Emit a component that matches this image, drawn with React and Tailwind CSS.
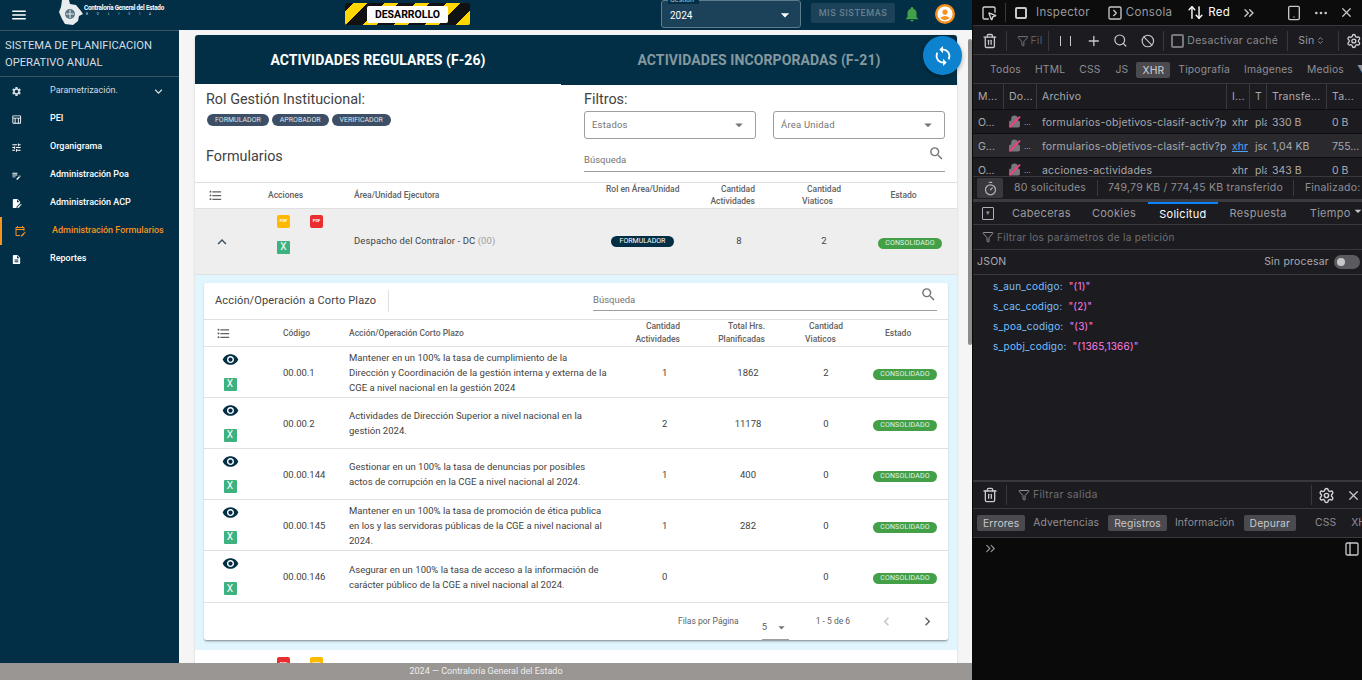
import React from "react";
import {
  MdMenu, MdSettings, MdTune, MdEditNote, MdEditDocument, MdDescription, MdExpandMore, MdExpandLess,
  MdArrowDropDown, MdNotifications, MdAccountCircle, MdSync, MdSearch, MdFormatListBulleted,
  MdRemoveRedEye, MdChevronLeft, MdChevronRight, MdOutlineTableChart, MdOutlineEditCalendar,
} from "react-icons/md";
import {
  Trash2, Funnel, Plus, Search, Ban, Settings, SquareMousePointer, SquareChevronRight, ArrowUpDown,
  ChevronsRight, Ellipsis, X, Timer, PanelLeft, Tablet, Lock, ChevronsUpDown,
} from "lucide-react";

const MENU = [
  { label: "Parametrización.", icon: MdSettings, chevron: true, light: true },
  { label: "PEI", icon: MdOutlineTableChart },
  { label: "Organigrama", icon: MdTune },
  { label: "Administración Poa", icon: MdEditNote },
  { label: "Administración ACP", icon: MdEditDocument },
  { label: "Administración Formularios", icon: MdOutlineEditCalendar, active: true },
  { label: "Reportes", icon: MdDescription },
];

const ROWS = [
  { code: "00.00.1", text: "Mantener en un 100% la tasa de cumplimiento de la Dirección y Coordinación de la gestión interna y externa de la CGE a nivel nacional en la gestión 2024", act: "1", hrs: "1862", via: "2" },
  { code: "00.00.2", text: "Actividades de Dirección Superior a nivel nacional en la gestión 2024.", act: "2", hrs: "11178", via: "0" },
  { code: "00.00.144", text: "Gestionar en un 100% la tasa de denuncias por posibles actos de corrupción en la CGE a nivel nacional al 2024.", act: "1", hrs: "400", via: "0" },
  { code: "00.00.145", text: "Mantener en un 100% la tasa de promoción de ética publica en los y las servidoras públicas de la CGE a nivel nacional al 2024.", act: "1", hrs: "282", via: "0" },
  { code: "00.00.146", text: "Asegurar en un 100% la tasa de acceso a la información de carácter público de la CGE a nivel nacional al 2024.", act: "0", hrs: "", via: "0", tall: true },
];

const PdfIcon = ({ red }) => (
  <div className={`w-[13px] h-[13px] rounded-[2px] flex items-center justify-center text-[4px] font-bold text-white leading-none ${red ? "bg-[#ea2d2e]" : "bg-[#ffb900]"}`}>
    PDF
  </div>
);

const XlsIcon = () => (
  <div className="w-[13px] h-[13px] rounded-[1px] bg-[#3cb281] flex items-center justify-center text-[10px] text-white leading-none">X</div>
);

const Chip = ({ children }) => (
  <span className="h-[12px] px-[8px] rounded-full bg-[#3d4f66] text-[7px] leading-[12px] text-[#dfe3e8]">{children}</span>
);

const Consolidado = () => (
  <span className="inline-block w-[64px] h-[11px] rounded-full bg-[#43a047] text-center text-[7px] leading-[11px] text-[#e4f3e5] tracking-[0.2px]">CONSOLIDADO</span>
);

const SelectBox = ({ label }) => (
  <div className="flex-1 h-[28px] border border-[#9e9e9e] rounded-[3px] flex items-center justify-between pl-[7px] pr-[7px] text-[9.5px] text-[#757575] tracking-[0.2px]">
    {label}
    <MdArrowDropDown className="text-[#757575]" size={18} />
  </div>
);

const Sidebar = () => (
  <aside className="w-[179px] shrink-0 bg-[#022f46] text-white">
    <div className="h-[47px] border-t border-b border-[#3a5568] pl-[5px] pt-[6px] text-[11.2px] leading-[17px] text-[#d5dde2] whitespace-nowrap">
      SISTEMA DE PLANIFICACION
      <br />
      OPERATIVO ANUAL
    </div>
    {MENU.map((m) => {
      const Icon = m.icon;
      return (
        <div
          key={m.label}
          className={`h-[28px] flex items-center border-l-2 pl-[9px] text-[9px] font-medium ${m.active ? "border-[#f6921e] text-[#f6921e]" : "border-transparent"} ${m.light ? "text-[#d5dde2] font-normal" : ""}`}
        >
          <Icon size={m.active ? 12 : 11} className={m.active ? "ml-[3px]" : ""} />
          <span className={`${m.active ? "ml-[26px]" : "ml-[28px]"} whitespace-nowrap flex-1`}>{m.label}</span>
          {m.chevron && <MdExpandMore size={15} className="mr-[13px]" />}
        </div>
      );
    })}
  </aside>
);

const Header = () => (
  <header className="h-[30px] shrink-0 bg-[#022f46] flex items-center text-white">
    <MdMenu size={18} className="ml-[10px]" />
    <div className="ml-[31px] w-[104px] h-[30px] flex items-start">
      <svg width="24" height="25" viewBox="0 0 24 25" className="shrink-0">
        <path d="M3 0h7l1 4 6 1 5 6 2 3-4 2-1 5-5 4-8-1-3-5-3-7 2-5z" fill="#e8ecef" />
        <circle cx="11" cy="14" r="5" fill="#5d7685" />
        <path d="M7 14h8M11 10v8" stroke="#e8ecef" strokeWidth="1" />
      </svg>
      <div className="ml-[1px] pt-[5px] leading-none">
        <div className="text-[6.3px] font-bold tracking-[-0.2px] whitespace-nowrap">Contraloría General del Estado</div>
        <div className="text-[3px] tracking-[9px] mt-[2px] pl-[2px] text-[#d5dde2]">BOLIVIA</div>
      </div>
    </div>
    <div className="ml-[182px] w-[125px] h-[22px] mb-[2px] rounded-[2px] flex items-center justify-center bg-[repeating-linear-gradient(-45deg,#ffd600_0,#ffd600_10px,#111111_10px,#111111_22px)]">
      <span className="w-[81px] h-[17px] rounded-[2px] bg-white text-black text-[10.5px] font-bold leading-[17px] text-center">DESARROLLO</span>
    </div>
    <div className="ml-[191px] w-[140px] h-[28px] self-start border border-[#5d7c8e] rounded-[3px] bg-[#1b4259] relative flex items-center justify-between pl-[8px] pr-[8px] pt-[2px]">
      <span className="absolute -top-[5px] left-[6px] bg-[#022f46] px-[2px] text-[7px] text-[#b8c5cd] leading-[8px]">Gestión*</span>
      <span className="text-[10px]">2024</span>
      <MdArrowDropDown size={20} className="-mr-[3px]" />
    </div>
    <div className="ml-[10px] w-[84px] h-[20px] mb-[4px] rounded-[2px] bg-[#1b4259] text-[#66808f] text-[9px] font-medium tracking-[0.6px] leading-[20px] text-center">MIS SISTEMAS</div>
    <MdNotifications size={18} className="ml-[8px] mb-[2px] text-[#43a047]" />
    <div className="ml-[14px] mb-[2px] w-[20px] h-[20px] rounded-full bg-[#f6921e] flex items-center justify-center">
      <MdAccountCircle size={18} className="text-white" />
    </div>
  </header>
);

const OuterHead = () => (
  <div className="h-[27px] pb-[1px] border-t border-b border-[#e0e0e0] grid grid-cols-[73px_86px_252px_74px_118px_52px_1fr] items-center text-[8.5px] font-medium text-[#616161] leading-[12px]">
    <MdFormatListBulleted size={15} className="ml-[13px] text-[#616161]" />
    <span>Acciones</span>
    <span>Área/Unidad Ejecutora</span>
    <span className="whitespace-nowrap self-start">Rol en Área/Unidad</span>
    <span className="pr-[43px] text-right whitespace-nowrap">Cantidad<br />Actividades</span>
    <span className="pl-[4px] whitespace-nowrap"><span className="pl-[5px]">Cantidad</span><br />Viaticos</span>
    <span className="text-center">Estado</span>
  </div>
);

const OpenRow = () => (
  <div className="h-[66px] bg-[#eeeeee] border-b border-[#e0e0e0] grid grid-cols-[73px_86px_252px_74px_118px_52px_1fr] items-center text-[9.5px] text-[#424242]">
    <MdExpandLess size={18} className="ml-[18px] text-[#37505f]" />
    <div className="grid grid-cols-[33px_13px] gap-y-[13px] pl-[9px] pb-[15px]">
      <PdfIcon />
      <PdfIcon red />
      <XlsIcon />
    </div>
    <div className="whitespace-nowrap tracking-[0.1px]">
      Despacho del Contralor - DC <span className="text-[#9e9e9e]">(00)</span>
    </div>
    <div className="pl-[5px]">
      <span className="block w-[63px] h-[11px] rounded-full bg-[#022f46] text-center text-[7px] leading-[11px] text-white">FORMULADOR</span>
    </div>
    <span className="text-center">8</span>
    <span className="text-center">2</span>
    <div className="pl-[28px] pt-[2px]"><Consolidado /></div>
  </div>
);

const InnerTable = () => (
  <div className="bg-white rounded-[3px] border-b border-[#9aa5ab] shadow-[0_1px_2px_rgba(0,0,0,0.2)]">
    <div className="h-[36px] flex items-center">
      <div className="w-[185px] h-[22px] border-r border-[#e0e0e0] pl-[11px] text-[11px] leading-[22px] text-[#424242] tracking-[0.15px] whitespace-nowrap">Acción/Operación a Corto Plazo</div>
      <div className="ml-[204px] w-[344px] h-[26px] mb-[6px] border-b border-[#9e9e9e] flex items-center justify-between text-[9.5px] text-[#757575]">
        <span className="pt-[6px]">Búsqueda</span>
        <MdSearch size={17} className="mb-[6px] text-[#757575]" />
      </div>
    </div>
    <div className="h-[28px] pb-[2px] border-t border-b border-[#e0e0e0] grid grid-cols-[79px_66px_281px_68px_84px_88px_70px] items-center text-[8.5px] font-medium text-[#616161] leading-[13px]">
      <MdFormatListBulleted size={15} className="ml-[12px]" />
      <span>Código</span>
      <span>Acción/Operación Corto Plazo</span>
      <span className="pr-[18px] text-right whitespace-nowrap">Cantidad<br />Actividades</span>
      <span className="pr-[17px] text-right whitespace-nowrap">Total Hrs.<br />Planificadas</span>
      <span className="pl-[23px] whitespace-nowrap"><span className="pl-[4px]">Cantidad</span><br />Viaticos</span>
      <span className="pl-[15px]">Estado</span>
    </div>
    {ROWS.map((r) => (
      <div key={r.code} className={`${r.tall ? "h-[52px]" : "h-[51px]"} border-b border-[#e0e0e0] grid grid-cols-[79px_66px_281px_68px_84px_88px_70px] items-center text-[9.5px] text-[#424242] leading-[15px]`}>
        <div className="flex flex-col items-center w-[52px] gap-[10px] pb-[3px]">
          <MdRemoveRedEye size={17} className="text-[#022f46]" />
          <XlsIcon />
        </div>
        <span>{r.code}</span>
        <span className="pr-[22px] tracking-[0.02px]">{r.text}</span>
        <span className="pl-[32px] text-left">{r.act}</span>
        <span className="pl-[16px] text-center">{r.hrs}</span>
        <span className="text-center">{r.via}</span>
        <div className="pl-[3px]"><Consolidado /></div>
      </div>
    ))}
    <div className="h-[37px] flex items-center text-[8.5px] text-[#616161]">
      <span className="ml-[474px]">Filas por Página</span>
      <div className="ml-[23px] w-[27px] h-[24px] mt-[12px] border-b border-[#9e9e9e] flex items-center justify-between">
        <span className="text-[9.5px]">5</span>
        <MdArrowDropDown size={15} className="text-[#757575]" />
      </div>
      <span className="ml-[27px] whitespace-nowrap">1 - 5 de 6</span>
      <MdChevronLeft size={17} className="ml-[28px] text-[#c4c4c4]" />
      <MdChevronRight size={17} className="ml-[24px] text-[#616161]" />
    </div>
  </div>
);

const Card = () => (
  <div className="relative w-[762px] ml-[16px] mt-[5px] bg-white shadow-[0_1px_3px_rgba(0,0,0,0.15)] rounded-t-[3px]">
    <div className="h-[50px] flex text-[14px] font-bold">
      <div className="w-[366px] h-[49px] bg-[#022f46] rounded-tl-[3px] text-center leading-[50px] text-white tracking-[0.1px]">ACTIVIDADES REGULARES (F-26)</div>
      <div className="flex-1 bg-[#022f46] rounded-tr-[3px] text-center leading-[50px] text-[#85989f] tracking-[0.1px]">ACTIVIDADES INCORPORADAS (F-21)</div>
    </div>
    <div className="absolute top-[1px] -right-[5px] w-[39px] h-[39px] rounded-full bg-[#0d83d0] flex items-center justify-center shadow-[0_2px_4px_rgba(0,0,0,0.3)]">
      <MdSync size={22} className="text-white" />
    </div>
    <div className="h-[97px] flex">
      <div className="w-[389px] pl-[11px] pt-[6px] text-[#424242]">
        <div className="text-[14.4px] leading-[18px] whitespace-nowrap">Rol Gestión Institucional:</div>
        <div className="flex gap-[3px] mt-[5px] pl-[1px]">
          <Chip>FORMULADOR</Chip>
          <Chip>APROBADOR</Chip>
          <Chip>VERIFICADOR</Chip>
        </div>
        <div className="text-[14.4px] leading-[18px] mt-[22px]">Formularios</div>
      </div>
      <div className="w-[361px] pt-[6px]">
        <div className="text-[14.4px] leading-[18px] text-[#424242]">Filtros:</div>
        <div className="flex gap-[17px] mt-[2px]">
          <SelectBox label="Estados" />
          <SelectBox label="Área Unidad" />
        </div>
        <div className="h-[33px] border-b border-[#9e9e9e] flex items-center justify-between text-[9.5px] text-[#757575]">
          <span className="pt-[11px]">Búsqueda</span>
          <MdSearch size={17} className="mb-[4px]" />
        </div>
      </div>
    </div>
    <OuterHead />
    <OpenRow />
    <div className="bg-[#e1f5fe] px-[9px] pt-[8px] pb-[9px]">
      <InnerTable />
    </div>
    <div className="flex gap-[20px] pl-[82px] pt-[7px] h-[40px]">
      <PdfIcon red />
      <PdfIcon />
    </div>
  </div>
);

const Seg = ({ children, className = "" }) => <span className={`whitespace-nowrap ${className}`}>{children}</span>;

const NetRow = ({ m, file, cause, type, tr, size, hl, clipped }) => (
  <div className={`${clipped ? "h-[19px]" : "h-[24px]"} grid grid-cols-[31px_33px_190px_23px_17px_60px_1fr] items-start pt-[5px] border-t border-[#0e0e10] text-[10.5px] text-[#a9a9ae] overflow-hidden ${hl ? "bg-[#2a2a2e]" : ""}`}>
    <span className="pl-[5px]">{m}</span>
    <span className="pl-[4px] flex items-center gap-[3px]">
      <span className="relative">
        <Lock size={13} className="text-[#77777c] fill-[#77777c]" />
        <span className="absolute left-[-1px] top-[6px] w-[15px] h-[1.5px] -rotate-45 bg-[#f0417b]" />
      </span>
      <span className="text-[8px]">...</span>
    </span>
    <span className="pl-[5px] whitespace-nowrap overflow-hidden tracking-[0.2px]">{file}</span>
    <span className={`pl-[5px] overflow-hidden ${hl ? "text-[#4da3f7] underline" : ""}`}>{cause}</span>
    <span className="pl-[5px] overflow-hidden">{type}</span>
    <span className="pl-[5px] whitespace-nowrap">{tr}</span>
    <span className="pl-[5px] whitespace-nowrap">{size}</span>
  </div>
);

const Param = ({ k, v }) => (
  <div className="h-[20px] pl-[20px] flex gap-[6px] items-center text-[10px] tracking-[0.2px]">
    <span className="text-[#75bfff]">{k}:</span>
    <span className="text-[#ff7de9]">{v}</span>
  </div>
);

const DevTools = () => (
  <section className="w-[390px] shrink-0 h-[680px] bg-[#1c1b20] text-[#b1b1b3] font-['Inter',sans-serif] overflow-hidden border-l border-[#0a0a0b]">
    <div className="h-[26px] bg-[#0c0c0d] border-b border-[#38383d] flex items-center text-[11.5px] tracking-[0.3px]">
      <SquareMousePointer size={16} className="ml-[8px] text-[#d4d4d6]" />
      <span className="w-px h-[19px] bg-[#38383d] ml-[8px]" />
      <span className="ml-[9px] w-[12px] h-[12px] rounded-[2px] border-2 border-[#c8c8ca]" />
      <span className="ml-[9px] text-[#9a9a9e]">Inspector</span>
      <SquareChevronRight size={16} className="ml-[17px] text-[#c8c8ca]" />
      <span className="ml-[3px] text-[#9a9a9e]">Consola</span>
      <ArrowUpDown size={17} className="ml-[15px] text-white" />
      <span className="ml-[4px] text-white">Red</span>
      <ChevronsRight size={16} className="ml-[11px] text-[#c8c8ca]" />
      <Tablet size={16} className="ml-[29px] text-[#c8c8ca]" />
      <Ellipsis size={16} className="ml-[11px] text-[#c8c8ca]" />
      <X size={15} className="ml-[10px] text-[#c8c8ca]" />
    </div>
    <div className="h-[29px] pt-[1px] border-b border-[#38383d] flex items-center text-[10.5px] tracking-[0.3px]">
      <Trash2 size={16} className="ml-[9px] text-[#c8c8ca]" />
      <span className="w-px h-[20px] bg-[#38383d] ml-[8px]" />
      <Funnel size={12} className="ml-[10px] text-[#77777c]" />
      <span className="ml-[2px] text-[#5f5f64]">Fil</span>
      <span className="w-px h-[20px] bg-[#38383d] ml-[5px]" />
      <span className="ml-[11px] w-px h-[10px] bg-[#c8c8ca]" />
      <span className="ml-[9px] w-px h-[10px] bg-[#c8c8ca]" />
      <Plus size={16} className="ml-[15px] text-[#c8c8ca]" />
      <Search size={15} className="ml-[12px] text-[#c8c8ca]" />
      <Ban size={14} className="ml-[13px] text-[#c8c8ca]" />
      <span className="w-px h-[20px] bg-[#38383d] ml-[8px]" />
      <span className="ml-[7px] w-[14px] h-[14px] rounded-[2px] border-2 border-[#77777c]" />
      <span className="ml-[3px] text-[#8a8a8f] whitespace-nowrap">Desactivar caché</span>
      <span className="w-px h-[20px] bg-[#38383d] ml-[9px]" />
      <span className="ml-[10px] text-[#9a9a9e]">Sin</span>
      <ChevronsUpDown size={9} className="ml-[1px] text-[#b1b1b3]" />
      <span className="w-px h-[20px] bg-[#38383d] ml-[14px]" />
      <Settings size={16} className="ml-[7px] text-[#d4d4d6]" />
    </div>
    <div className="h-[29px] pt-[1px] border-b border-[#38383d] flex items-center text-[10.3px] tracking-[0.2px] text-[#8f8f94] whitespace-nowrap overflow-hidden">
      <span className="ml-[17px]">Todos</span>
      <span className="ml-[14px]">HTML</span>
      <span className="ml-[14px]">CSS</span>
      <span className="ml-[15px]">JS</span>
      <span className="ml-[8px] px-[6px] h-[16px] leading-[16px] rounded-[2px] bg-[#4a4a4f] text-[#d4d4d6]">XHR</span>
      <span className="ml-[8px]">Tipografía</span>
      <span className="ml-[14px]">Imágenes</span>
      <span className="ml-[14px]">Medios</span>
      <span className="ml-[13px]">▼</span>
    </div>
    <div className="h-[25px] grid grid-cols-[31px_33px_190px_23px_17px_60px_1fr] items-center text-[10.5px] text-[#a9a9ae] tracking-[0.2px] divide-x divide-[#38383d]">
      <span className="pl-[5px] leading-[25px]">M...</span>
      <span className="pl-[5px] leading-[25px]">Do...</span>
      <span className="pl-[5px] leading-[25px]">Archivo</span>
      <span className="pl-[5px] leading-[25px]">I...</span>
      <span className="pl-[5px] leading-[25px]">T</span>
      <span className="pl-[5px] leading-[25px]">Transfe...</span>
      <span className="pl-[5px] leading-[25px]">Ta...</span>
    </div>
    <NetRow m="O..." file="formularios-objetivos-clasif-activ?po" cause="xhr" type="pla" tr="330 B" size="0 B" />
    <NetRow m="G..." file="formularios-objetivos-clasif-activ?po" cause="xhr" type="jso" tr="1,04 KB" size="755..." hl />
    <NetRow m="O..." file="acciones-actividades" cause="xhr" type="pla" tr="343 B" size="0 B" clipped />
    <div className="h-[23px] border-t border-[#38383d] flex items-center text-[10.5px] tracking-[0.2px] text-[#8f8f94] overflow-hidden">
      <span className="ml-[4px] w-[26px] h-[20px] rounded-[2px] bg-[#38383d] flex items-center justify-center">
        <Timer size={15} className="text-[#b1b1b3]" />
      </span>
      <Seg className="ml-[11px]">80 solicitudes</Seg>
      <span className="w-px h-[16px] bg-[#38383d] ml-[11px]" />
      <Seg className="ml-[10px]">749,79 KB / 774,45 KB transferido</Seg>
      <span className="w-px h-[16px] bg-[#38383d] ml-[10px]" />
      <Seg className="ml-[11px]">Finalizado:</Seg>
    </div>
    <div className="h-[25px] border-t-[3px] border-[#3a3a3f] flex items-stretch text-[11px] tracking-[0.3px] text-[#9a9a9e] whitespace-nowrap overflow-hidden">
      <span className="shrink-0 ml-[9px] mt-[5px] w-[12px] h-[13px] border border-[#b1b1b3] rounded-[1px] flex justify-center text-[7px] leading-[9px]">▾</span>
      <span className="ml-[18px] leading-[22px]">Cabeceras</span>
      <span className="ml-[21px] leading-[22px]">Cookies</span>
      <span className="ml-[12px] px-[11px] leading-[20px] border-t-2 border-[#0a84ff] text-white">Solicitud</span>
      <span className="ml-[12px] leading-[22px]">Respuesta</span>
      <span className="ml-[23px] leading-[22px]">Tiempo</span>
      <MdArrowDropDown size={16} className="shrink-0 -ml-[1px] mt-[1px] text-[#c8c8ca]" />
    </div>
    <div className="h-[26px] border-t border-b border-[#38383d] flex items-center text-[10px] tracking-[0.3px] text-[#6e6e73]">
      <Funnel size={12} className="ml-[9px] text-[#8f8f94]" />
      <span className="ml-[3px]">Filtrar los parámetros de la petición</span>
    </div>
    <div className="h-[25px] border-b border-[#38383d] flex items-center justify-between text-[10.5px] tracking-[0.2px] text-[#a9a9ae]">
      <span className="ml-[4px]">JSON</span>
      <div className="flex items-center gap-[5px] mr-[2px]">
        <span>Sin procesar</span>
        <span className="w-[26px] h-[14px] rounded-full bg-[#5a5a5f] flex items-center pl-[3px]">
          <span className="w-[8px] h-[8px] rounded-full bg-[#c8c8ca]" />
        </span>
      </div>
    </div>
    <div className="h-[205px] pt-[1px]">
      <Param k="s_aun_codigo" v={'"(1)"'} />
      <Param k="s_cac_codigo" v={'"(2)"'} />
      <Param k="s_poa_codigo" v={'"(3)"'} />
      <Param k="s_pobj_codigo" v={'"(1365,1366)"'} />
    </div>
    <div className="h-[29px] border-t-2 border-b border-[#38383d] flex items-center justify-between text-[10.5px] tracking-[0.3px] text-[#6e6e73]">
      <div className="flex items-center">
        <Trash2 size={16} className="ml-[9px] text-[#c8c8ca]" />
        <span className="w-px h-[20px] bg-[#38383d] ml-[8px]" />
        <Funnel size={12} className="ml-[11px] text-[#8f8f94]" />
        <span className="ml-[3px] whitespace-nowrap">Filtrar salida</span>
      </div>
      <div className="flex items-center">
        <span className="w-px h-[20px] bg-[#38383d]" />
        <Settings size={17} className="ml-[6px] text-[#d4d4d6]" />
        <X size={15} className="ml-[11px] mr-[1px] text-[#c8c8ca]" />
      </div>
    </div>
    <div className="h-[29px] border-b border-[#38383d] flex items-center text-[10.3px] tracking-[0.15px] text-[#8f8f94] whitespace-nowrap overflow-hidden">
      <span className="ml-[4px] px-[6px] h-[16px] leading-[16px] rounded-[2px] bg-[#4a4a4f] text-[#c8c8ca]">Errores</span>
      <span className="ml-[8px]">Advertencias</span>
      <span className="ml-[9px] px-[6px] h-[16px] leading-[16px] rounded-[2px] bg-[#4a4a4f] text-[#c8c8ca]">Registros</span>
      <span className="ml-[8px]">Información</span>
      <span className="ml-[9px] px-[6px] h-[16px] leading-[16px] rounded-[2px] bg-[#4a4a4f] text-[#c8c8ca]">Depurar</span>
      <span className="w-px h-[20px] bg-[#38383d] ml-[6px]" />
      <span className="ml-[13px]">CSS</span>
      <span className="ml-[15px]">XHR</span>
    </div>
    <div className="h-[150px] bg-[#0a0a0b] flex items-start justify-between pt-[3px]">
      <ChevronsRight size={15} className="ml-[10px] text-[#8f8f94]" />
      <PanelLeft size={16} className="mr-[2px] text-[#c8c8ca]" />
    </div>
  </section>
);

export default function App() {
  return (
    <div className="w-[1362px] h-[680px] flex overflow-hidden font-['Roboto',sans-serif] bg-[#0a0a0b]">
      <div className="w-[972px] shrink-0 h-[680px] flex flex-col">
        <Header />
        <div className="flex-1 flex min-h-0">
          <Sidebar />
          <main className="flex-1 bg-[#f5f5f5] overflow-hidden relative">
            <Card />
            <div className="absolute right-0 top-[9px] w-[4px] h-[306px] rounded-full bg-[#8c8c8c]" />
          </main>
        </div>
        <footer className="h-[17px] shrink-0 bg-[#9a9694] text-center text-[9px] leading-[17px] text-[#eeeeee]">
          2024 — Contraloría General del Estado
        </footer>
      </div>
      <DevTools />
    </div>
  );
}
